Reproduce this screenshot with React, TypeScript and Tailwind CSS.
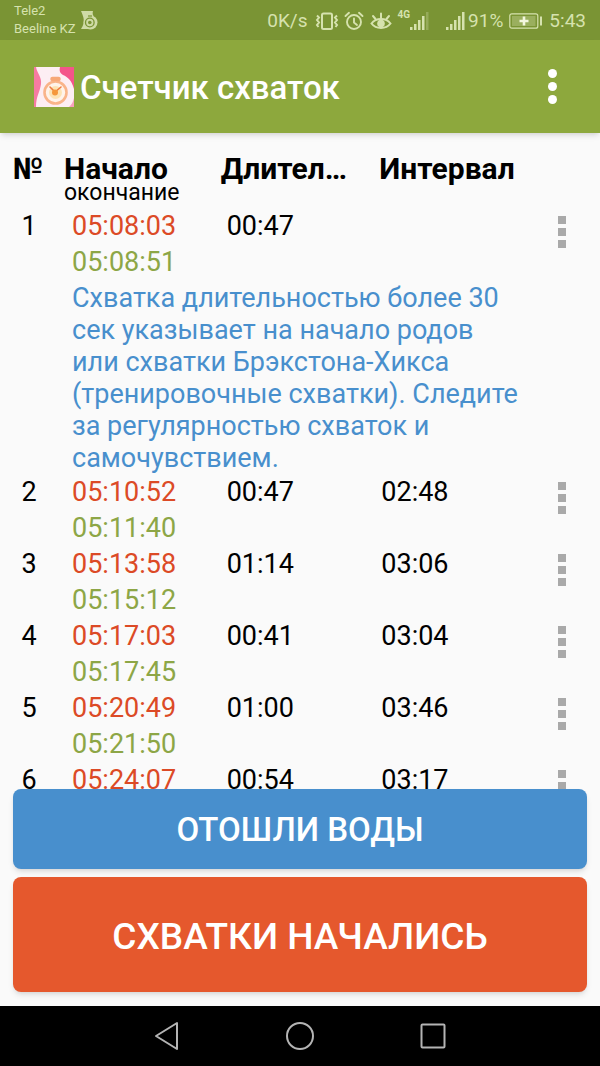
import React from "react";
import clsx from "clsx";

type Contraction = {
    id: number;
    start: string;
    end: string;
    duration: string;
    interval?: string;
    note?: string;
};

const contractions: Contraction[] = [
    {
        id: 1,
        start: "05:08:03",
        end: "05:08:51",
        duration: "00:47",
        note: "Схватка длительностью более 30 сек указывает на начало родов или схватки Брэкстона-Хикса (тренировочные схватки). Следите за регулярностью схваток и самочувствием.",
    },
    { id: 2, start: "05:10:52", end: "05:11:40", duration: "00:47", interval: "02:48" },
    { id: 3, start: "05:13:58", end: "05:15:12", duration: "01:14", interval: "03:06" },
    { id: 4, start: "05:17:03", end: "05:17:45", duration: "00:41", interval: "03:04" },
    { id: 5, start: "05:20:49", end: "05:21:50", duration: "01:00", interval: "03:46" },
    { id: 6, start: "05:24:07", end: "05:25:02", duration: "00:54", interval: "03:17" },
];

const TimerBadge = () => (
    <svg width="17" height="20" viewBox="0 0 17 20">
        <path d="M0 1h12c-.5 2-.5 3 .5 5L9 19H0c2.500-4 3.500-7 2.500-11C2 5.500 1 3.500 0 1z" fill="#cfdba6" />
        <circle cx="9.500" cy="12.500" r="7" fill="#cfdba6" />
        <circle cx="8.800" cy="12.500" r="4.300" fill="none" stroke="#7a9434" strokeWidth="1.300" />
        <circle cx="8.800" cy="12.500" r="1.800" fill="#7a9434" />
        <path d="M7 6h4" stroke="#7a9434" strokeWidth="1.200" />
    </svg>
);

const VibrateIcon = () => (
    <svg width="26" height="20" viewBox="0 0 26 20" fill="none" stroke="currentColor" strokeWidth="2">
        <rect x="8" y="2.500" width="10" height="15.500" rx="1.500" />
        <path d="M3 4.500 5 6.500 3 9 5 11.500 3 14 4.500 16M23 4.500 21 6.500 23 9 21 11.500 23 14 21.500 16" />
    </svg>
);

const AlarmIcon = () => (
    <svg width="20" height="20" viewBox="0 0 20 20" fill="none" stroke="currentColor" strokeWidth="1.900" strokeLinecap="round">
        <circle cx="10" cy="11" r="7" />
        <path d="M10 7.500v4l3 2.500M1.500 5 5 1.800M18.500 5 15 1.800" />
    </svg>
);

const EyeIcon = () => (
    <svg width="22" height="20" viewBox="0 0 22 20" fill="none" stroke="currentColor" strokeWidth="2" strokeLinecap="round">
        <path d="M1.500 12.500C6 6.500 16 6.500 20.500 12.500 16 18.500 6 18.500 1.500 12.500z" />
        <circle cx="11" cy="12.500" r="3.800" fill="currentColor" stroke="none" />
        <path d="M11 7V2.500M5.500 8 3 5M16.500 8 19 5" />
    </svg>
);

const SignalBars = ({ weak }: { weak?: boolean }) => (
    <svg width="20" height="20" viewBox="0 0 20 20" fill="currentColor">
        <path d="M0 16h2.500v3H0zM4 13h2.500v6H4zM8 9h2.500v10H8zM12 5h2.500v14H12z" />
        <path d="M16 1h2.500v18H16z" opacity={weak ? 0.3 : 1} />
    </svg>
);

const BatteryIcon = () => (
    <svg width="34" height="16" viewBox="0 0 34 16">
        <rect x="0.800" y="0.800" width="28" height="14.400" rx="2" fill="none" stroke="currentColor" strokeWidth="1.200" />
        <rect x="3" y="3" width="23.500" height="10" fill="currentColor" opacity="0.350" />
        <path d="M15 3.500v9M10.500 8h9" stroke="#f3f7df" strokeWidth="2.600" />
        <path d="M32 3.500v9" stroke="currentColor" strokeWidth="2" />
    </svg>
);

const AppLogo = () => (
    <svg width="40" height="40" viewBox="0 0 40 40">
        <rect width="40" height="40" rx="1" fill="#fdeef3" />
        <path d="M0 0h2c1 6 6 10 5 17-1 8-5 12-5 23H0z" fill="#f67ba2" />
        <path d="M26 0h14v22c-2-8-6-12-11-14-3-2-4-4-3-8z" fill="#f4558a" />
        <path d="M40 31v9h-5c3-3 4-5 5-9z" fill="#f8a0bd" />
        <circle cx="21.500" cy="25.500" r="11" fill="#fff3ea" stroke="#f9b48a" strokeWidth="2.600" />
        <circle cx="21.500" cy="25.500" r="6.500" fill="#fde3b4" />
        <path d="M18.500 12h6" stroke="#f7a878" strokeWidth="4.500" strokeLinecap="round" />
        <path d="M16 20l5 5 6-5" fill="none" stroke="#ee7a40" strokeWidth="1.600" strokeLinecap="round" />
        <circle cx="21" cy="25.500" r="3" fill="#f5983a" />
    </svg>
);

const StatusBar = () => (
    <div className="h-10 shrink-0 bg-[#7a9434] text-[#d6e2ae] flex items-center justify-between pl-3.5 pr-3.5">
        <div className="flex items-center gap-1.5">
            <div className="text-[13px] leading-[18px]">
                <div>Tele2</div>
                <div>Beeline KZ</div>
            </div>
            <TimerBadge />
        </div>
        <div className="flex items-center text-[19px] leading-6 pt-px">
            <span className="pr-1.5">0K/s</span>
            <VibrateIcon />
            <span className="pl-1 pr-1.5">
                <AlarmIcon />
            </span>
            <EyeIcon />
            <span className="pl-1.5 pb-3 text-[10px] leading-3 font-bold">4G</span>
            <SignalBars weak />
            <span className="pl-4">
                <SignalBars />
            </span>
            <span className="pl-0.5 pr-1.5">91%</span>
            <BatteryIcon />
            <span className="pl-1.5">5:43</span>
        </div>
    </div>
);

const AppBar = () => (
    <header className="relative z-10 h-[93px] shrink-0 bg-[#8da83d] text-white shadow-md flex items-center pl-[34px] pr-8">
        <AppLogo />
        <h1 className="flex-1 pl-1.5 pt-0.5 text-[33px] leading-10 font-medium">Счетчик схваток</h1>
        <button type="button" aria-label="Меню" className="w-8 h-12 flex flex-col items-center justify-center gap-1">
            <span className="size-[9px] rounded-full bg-white" />
            <span className="size-[9px] rounded-full bg-white" />
            <span className="size-[9px] rounded-full bg-white" />
        </button>
    </header>
);

const RowMenu = ({ id }: { id: number }) => (
    <button type="button" aria-label={`Действия, схватка ${id}`} className="w-full pt-2 pl-1 flex flex-col items-center gap-1">
        <span className="size-2 bg-[#a9a9a9]" />
        <span className="size-2 bg-[#a9a9a9]" />
        <span className="size-2 bg-[#a9a9a9]" />
    </button>
);

const ContractionRow = ({ item }: { item: Contraction }) => (
    <>
        <tr className="align-top">
            <td className="pl-0.5 text-center">{item.id}</td>
            <td className="pl-4">
                <div className="text-[#dc4a26]">{item.start}</div>
                <div className="text-[#8da646]">{item.end}</div>
            </td>
            <td className="pl-4">{item.duration}</td>
            <td className="pl-4">{item.interval}</td>
            <td>
                <RowMenu id={item.id} />
            </td>
        </tr>
        {item.note && (
            <tr>
                <td />
                <td colSpan={3} className="pl-4 pt-0.5 leading-8 text-[#488fcd]">
                    {item.note}
                </td>
                <td />
            </tr>
        )}
    </>
);

const BigButton = ({ label, className }: { label: string; className: string }) => (
    <button type="button" className={clsx("w-full rounded-lg text-white font-medium shadow-md", className)}>
        {label}
    </button>
);

const NavBar = () => (
    <nav className="h-15 shrink-0 bg-black text-[#b4b4b4] flex items-center justify-center gap-[101px]">
        <button type="button" aria-label="Назад">
            <svg width="32" height="32" viewBox="0 0 32 32" fill="none" stroke="currentColor" strokeWidth="2" strokeLinejoin="round">
                <path d="M26 3v26L5 16z" />
            </svg>
        </button>
        <button type="button" aria-label="Домой">
            <svg width="32" height="32" viewBox="0 0 32 32" fill="none" stroke="currentColor" strokeWidth="2">
                <circle cx="16" cy="16" r="13" />
            </svg>
        </button>
        <button type="button" aria-label="Недавние">
            <svg width="32" height="32" viewBox="0 0 32 32" fill="none" stroke="currentColor" strokeWidth="2">
                <rect x="4.500" y="4.500" width="23" height="23" rx="1" />
            </svg>
        </button>
    </nav>
);

const App = () => {
    return (
        <div className="h-screen flex flex-col bg-[#fafafa] text-black font-[Roboto,sans-serif]">
            <StatusBar />
            <AppBar />
            <main className="flex-1 min-h-0 flex flex-col">
                <div className="flex-1 min-h-0 overflow-y-auto [scrollbar-width:none]">
                    <table className="w-full table-fixed text-[27px] leading-9">
                        <colgroup>
                            <col className="w-14" />
                            <col />
                            <col />
                            <col />
                            <col className="w-20" />
                        </colgroup>
                        <thead>
                            <tr className="align-top text-left text-[30px] leading-7">
                                <th className="pt-[22px] text-center">№</th>
                                <th className="pt-[22px] pb-[5px] pl-2">
                                    Начало
                                    <div className="text-[23px] leading-5 font-normal">окончание</div>
                                </th>
                                <th className="pt-[22px] pl-2.5">Длител…</th>
                                <th className="pt-[22px] pl-3.5">Интервал</th>
                                <td />
                            </tr>
                        </thead>
                        <tbody>
                            {contractions.map((item) => (
                                <ContractionRow key={item.id} item={item} />
                            ))}
                        </tbody>
                    </table>
                </div>
                <div className="shrink-0 px-[13px] pb-3.5 flex flex-col gap-2">
                    <BigButton label="ОТОШЛИ ВОДЫ" className="h-20 pt-0.5 bg-[#488fcd] text-[33px]" />
                    <BigButton label="СХВАТКИ НАЧАЛИСЬ" className="h-[115px] pt-1 bg-[#e5582d] text-[37px]" />
                </div>
            </main>
            <NavBar />
        </div>
    );
};

export default App;
